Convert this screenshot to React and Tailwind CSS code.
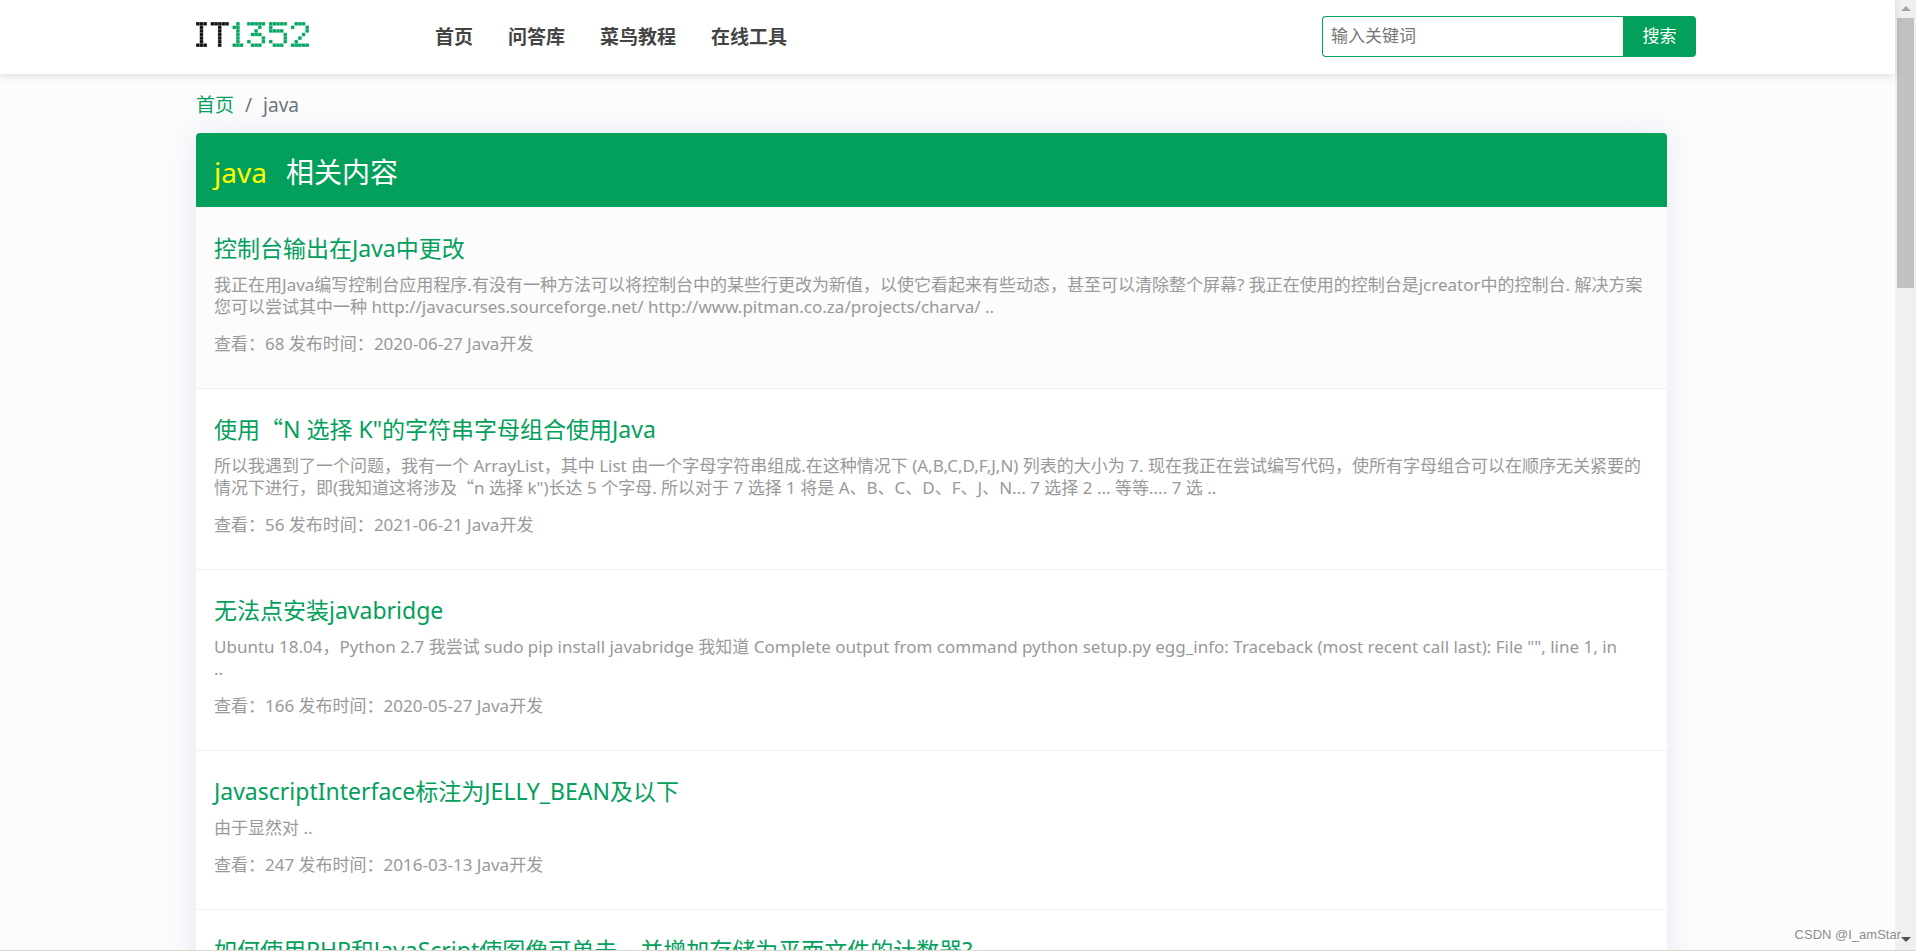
const NAV = ['首页', '问答库', '菜鸟教程', '在线工具']

const ITEMS = [
  {
    title: '控制台输出在Java中更改',
    desc: '我正在用Java编写控制台应用程序.有没有一种方法可以将控制台中的某些行更改为新值，以使它看起来有些动态，甚至可以清除整个屏幕? 我正在使用的控制台是jcreator中的控制台. 解决方案\n您可以尝试其中一种 http://javacurses.sourceforge.net/ http://www.pitman.co.za/projects/charva/ ..',
    views: 68,
    date: '2020-06-27',
    active: true,
  },
  {
    title: '使用“N 选择 K"的字符串字母组合使用Java',
    desc: '所以我遇到了一个问题，我有一个 ArrayList，其中 List 由一个字母字符串组成.在这种情况下 (A,B,C,D,F,J,N) 列表的大小为 7. 现在我正在尝试编写代码，使所有字母组合可以在顺序无关紧要的情况下进行，即(我知道这将涉及“n 选择 k")长达 5 个字母. 所以对于 7 选择 1 将是 A、B、C、D、F、J、N... 7 选择 2 ... 等等.... 7 选 ..',
    views: 56,
    date: '2021-06-21',
  },
  {
    title: '无法点安装javabridge',
    desc: 'Ubuntu 18.04，Python 2.7 我尝试 sudo pip install javabridge 我知道 Complete output from command python setup.py egg_info: Traceback (most recent call last): File "", line 1, in\n..',
    views: 166,
    date: '2020-05-27',
  },
  {
    title: 'JavascriptInterface标注为JELLY_BEAN及以下',
    desc: '由于显然对 ..',
    views: 247,
    date: '2016-03-13',
  },
  {
    title: '如何使用PHP和JavaScript使图像可单击，并增加存储为平面文件的计数器?',
    desc: '..',
    views: 92,
    date: '2020-06-10',
  },
]

// Dot matrix of the logo, one string per row
const LOGO = [
  '### ##### .#. ##### ##### .###.',
  '.#. ..#.. ##. ...#. #.... #...#',
  '.#. ..#.. .#. ..#.. ####. ....#',
  '.#. ..#.. .#. .###. ....# ...#.',
  '.#. ..#.. .#. ....# ....# ..#..',
  '.#. ..#.. .#. #...# #...# .#...',
  '### ..#.. ### .###. .###. #####',
]

function Logo() {
  const dots = []
  LOGO.forEach((row, y) => {
    row.split('').forEach((c, x) => {
      if (c === '#') dots.push({ x, y })
    })
  })
  return (
    <svg viewBox="0 0 31 7" className="block h-[25px] w-[113px]" preserveAspectRatio="none" role="img" aria-label="IT1352">
      {dots.map(d => (
        <g key={`${d.x}-${d.y}`} fill={d.x < 9 ? '#111' : '#03a65f'}>
          <rect x={d.x} y={d.y} width="1" height="1" opacity="0.6" />
          <rect x={d.x + 0.1} y={d.y + 0.1} width="0.8" height="0.8" />
        </g>
      ))}
    </svg>
  )
}

// Opening quotes take a full em, like the other Chinese punctuation
function Text({ children }) {
  return children.split('“').map((part, i) => (
    <span key={i}>
      {i > 0 && <span className="font-['Noto_Sans_CJK_SC',sans-serif] leading-none">“</span>}
      {part}
    </span>
  ))
}

function Header() {
  return (
    <header className="relative z-10 bg-white shadow-[0_2px_8px_rgba(0,0,0,0.12)]">
      <div className="mx-auto flex h-[74px] max-w-[1503px] items-center pr-[3px]">
        <a href="#home" className="pb-[6px]">
          <Logo />
        </a>
        <nav className="ml-[126px] flex gap-[35px] text-[19px] font-bold text-[#444]">
          {NAV.map(n => <a key={n} href={`#${n}`}>{n}</a>)}
        </nav>
        <form className="mb-[2px] ml-auto flex h-[41px] text-[17px]" onSubmit={e => e.preventDefault()}>
          <input
            type="text"
            aria-label="输入关键词"
            placeholder="输入关键词"
            className="w-[301px] rounded-l border border-r-0 border-[#03a05c] bg-white px-2 outline-none placeholder:text-[#757575]"
          />
          <button type="submit" className="w-[73px] rounded-r bg-[#03a05c] text-white">搜索</button>
        </form>
      </div>
    </header>
  )
}

function Item({ item }) {
  return (
    <li className={`border-b border-[#f0f0f0] px-[18px] pt-[26px] pb-[33px] ${item.active ? 'bg-[#fcfcfc]' : 'bg-white'}`}>
      <h2 className="text-[23px] leading-7 text-[#03a05c]">
        <a href="#item"><Text>{item.title}</Text></a>
      </h2>
      <p className="mt-[12px] text-[17px] leading-[22px] whitespace-pre-line"><Text>{item.desc}</Text></p>
      <p className="mt-[15px] text-[17px] leading-[22px]">
        查看：{item.views} 发布时间：{item.date} Java开发
      </p>
    </li>
  )
}

function Scrollbar() {
  return (
    <div className="flex w-[21px] shrink-0 flex-col items-center justify-between bg-[#f0f0f0] pt-[6px] pb-[8px]">
      <div className="flex flex-col items-center gap-[7px]">
        <svg viewBox="0 0 10 5" className="h-[5px] w-[10px]"><path d="M0 5 5 0l5 5z" fill="#a3a3a3" /></svg>
        <div className="h-[270px] w-[17px] bg-[#c1c1c1]" />
      </div>
      <svg viewBox="0 0 10 5" className="h-[5px] w-[10px]"><path d="M0 0l5 5 5-5z" fill="#505050" /></svg>
    </div>
  )
}

export default function App() {
  return (
    <div className="relative flex h-screen overflow-hidden border-b border-[#ddd8d0] bg-[#fcfcfc] font-['Noto_Sans','Noto_Sans_CJK_SC',sans-serif] text-[#999]">
      <div className="min-w-0 flex-1">
        <Header />
        <main className="mx-auto max-w-[1503px] pr-8">
          <nav className="flex h-[59px] items-center pt-[3px] text-[19px] text-[#6c757d]">
            <a href="#home" className="text-[#03a05c]">首页</a>
            <span className="px-[11px]">/</span>
            <span>java</span>
          </nav>
          <section className="rounded-t shadow-[0_0_35px_rgba(80,110,190,0.14)]">
            <h1 className="flex h-[74px] items-center gap-[19px] rounded-t bg-[#03a05c] px-[18px] pt-[3px] text-[28px] text-white">
              <span className="text-[#ff0]">java</span>
              相关内容
            </h1>
            <ul className="border-t border-[#fcfcfc]">
              {ITEMS.map(item => <Item key={item.title} item={item} />)}
            </ul>
          </section>
        </main>
      </div>
      <Scrollbar />
      <div className="absolute right-[15px] bottom-[6px] z-20 font-['Liberation_Sans',sans-serif] text-[13px] leading-[18px] text-[#8c8c8c] [text-shadow:1px_1px_0_#fff]">
        CSDN @I_amStar
      </div>
    </div>
  )
}
